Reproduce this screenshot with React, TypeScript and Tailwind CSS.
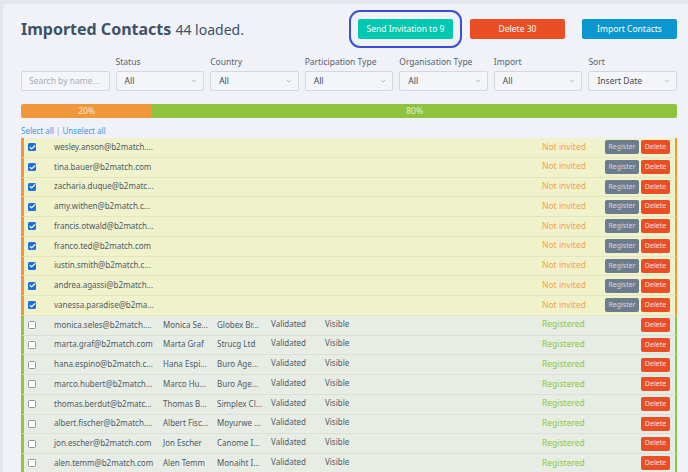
import React from 'react';
import { ChevronDown, Check } from 'lucide-react';

type Row = {
    email: string;
    name?: string;
    company?: string;
    registered: boolean;
};

const rows: Row[] = [
    { email: 'wesley.anson@b2match....', registered: false },
    { email: 'tina.bauer@b2match.com', registered: false },
    { email: 'zacharia.duque@b2matc...', registered: false },
    { email: 'amy.withen@b2match.c...', registered: false },
    { email: 'francis.otwald@b2match...', registered: false },
    { email: 'franco.ted@b2match.com', registered: false },
    { email: 'iustin.smith@b2match.c...', registered: false },
    { email: 'andrea.agassi@b2match...', registered: false },
    { email: 'vanessa.paradise@b2ma...', registered: false },
    { email: 'monica.seles@b2match....', name: 'Monica Se...', company: 'Globex Br...', registered: true },
    { email: 'marta.graf@b2match.com', name: 'Marta Graf', company: 'Strucg Ltd', registered: true },
    { email: 'hana.espino@b2match.c...', name: 'Hana Espi...', company: 'Buro Age...', registered: true },
    { email: 'marco.hubert@b2match...', name: 'Marco Hu...', company: 'Buro Age...', registered: true },
    { email: 'thomas.berdut@b2matc...', name: 'Thomas B...', company: 'Simplex Cl...', registered: true },
    { email: 'albert.fischer@b2match....', name: 'Albert Fisc...', company: 'Moyurwe ...', registered: true },
    { email: 'jon.escher@b2match.com', name: 'Jon Escher', company: 'Canome I...', registered: true },
    { email: 'alen.temm@b2match.com', name: 'Alen Temm', company: 'Monaiht I...', registered: true },
];

const filters = [
    { label: 'Status', value: 'All' },
    { label: 'Country', value: 'All' },
    { label: 'Participation Type', value: 'All' },
    { label: 'Organisation Type', value: 'All' },
    { label: 'Import', value: 'All' },
    { label: 'Sort', value: 'Insert Date' },
];

const Select = ({ label, value }: { label: string; value: string }) => (
    <div className="flex flex-col">
        <div className="h-[12px] leading-[12px] text-[8.5px] text-[#56616d] mb-[3px]">{label}</div>
        <div className="h-[20px] border border-[#d3d8e0] rounded-[2px] bg-[#f4f5f9] flex items-center justify-between pl-[8px] pr-[5px]">
            <span className="text-[8.5px] text-[#3f4a55]">{value}</span>
            <ChevronDown size={8} className="text-[#7a848f]" strokeWidth={1.5} />
        </div>
    </div>
);

const ContactRow = ({ row }: { row: Row }) => {
    const bg = row.registered
        ? 'bg-[#e7ede5] border-l-[#8dc63f] border-r-[#8dc63f] border-b-[#d9e0d7]'
        : 'bg-[#f0f2cc] border-l-[#f0973b] border-r-[#f0973b] border-b-[#e2e5bf]';
    return (
        <div className={`flex items-center h-[19.75px] border-l-[3px] border-r-[2px] border-b ${bg} text-[8px] text-[#4e5a66]`}>
            <div className="w-[30px] pl-[4px] flex items-center">
                {row.registered ? (
                    <div className="w-[8px] h-[8px] rounded-[1.5px] border border-[#8f979f] bg-white" />
                ) : (
                    <div className="w-[8px] h-[8px] rounded-[1.5px] bg-[#1b6fe0] flex items-center justify-center">
                        <Check size={7} strokeWidth={4} className="text-white" />
                    </div>
                )}
            </div>
            <div className="w-[109px] whitespace-nowrap -mt-[1px]">{row.email}</div>
            <div className="w-[54px] whitespace-nowrap -mt-[1px]">{row.name}</div>
            <div className="w-[54px] whitespace-nowrap -mt-[1px]">{row.company}</div>
            <div className="w-[54px] whitespace-nowrap -mt-[3px]">{row.registered ? 'Validated' : ''}</div>
            <div className="flex-1 whitespace-nowrap -mt-[3px]">{row.registered ? 'Visible' : ''}</div>
            <div className={`w-[63px] text-[8.5px] -mt-[1px] ${row.registered ? 'text-[#8dc63f]' : 'text-[#f3a24e]'}`}>
                {row.registered ? 'Registered' : 'Not invited'}
            </div>
            {row.registered ? (
                <div className="w-[36px]" />
            ) : (
                <div className="w-[34px] h-[14px] mr-[2px] rounded-[2px] bg-[#6b7c8d] text-[#d3dae1] text-[7px] flex items-center justify-center">
                    Register
                </div>
            )}
            <div className="w-[29px] h-[14px] mr-[5px] rounded-[2px] bg-[#e94e25] text-[#fde3dc] text-[7px] flex items-center justify-center">
                Delete
            </div>
        </div>
    );
};

export default function App() {
    return (
        <div className="w-[688px] h-[472px] overflow-hidden bg-[#e3e6ed]" style={{ fontFamily: '"Noto Sans", "Open Sans", sans-serif' }}>
            <div className="mt-[4px] ml-[3px] h-[468px] bg-[#f0f2f7] rounded-tl-[3px] pl-[18px] pr-[11px] pt-[15px]">
                <div className="flex items-center h-[20px]">
                    <div className="flex-1 text-[#3d5168] leading-none">
                        <span className="font-bold text-[16px]">Imported Contacts</span>{' '}
                        <span className="text-[14px]">44 loaded.</span>
                    </div>
                    <button className="w-[95px] h-[20px] rounded-[2px] bg-[#00c9b1] text-white text-[8.5px] outline-2 outline-[#3a4fd6] outline-offset-[7px]">
                        Send Invitation to 9
                    </button>
                    <button className="w-[95px] h-[20px] ml-[17px] rounded-[2px] bg-[#e94e25] text-white text-[8.5px]">
                        Delete 30
                    </button>
                    <button className="w-[95px] h-[20px] ml-[17px] rounded-[2px] bg-[#0a97cf] text-white text-[8.5px]">
                        Import Contacts
                    </button>
                </div>

                <div className="grid grid-cols-7 gap-x-[6px] mt-[17px] items-end">
                    <div className="h-[20px] border border-[#d3d8e0] rounded-[2px] bg-[#f4f5f9] flex items-center pl-[7px]">
                        <span className="text-[8.5px] text-[#a7aeb6]">Search by name...</span>
                    </div>
                    {filters.map((f) => (
                        <Select key={f.label} label={f.label} value={f.value} />
                    ))}
                </div>

                <div className="flex h-[14px] mt-[13px] rounded-[2px] overflow-hidden text-[8.5px] text-[#fbe7d3]">
                    <div className="w-[20%] bg-[#f0973b] flex items-center justify-center">20%</div>
                    <div className="flex-1 bg-[#8fc23d] flex items-center justify-center text-[#e3f0cd]">80%</div>
                </div>

                <div className="mt-[7px] h-[12px] leading-[12px] text-[8px] text-[#3b9bd8]">
                    Select all <span className="text-[#9aa3ad]">|</span> Unselect all
                </div>

                <div className="mt-[1px]">
                    {rows.map((r) => (
                        <ContactRow key={r.email} row={r} />
                    ))}
                </div>
            </div>
        </div>
    );
}
